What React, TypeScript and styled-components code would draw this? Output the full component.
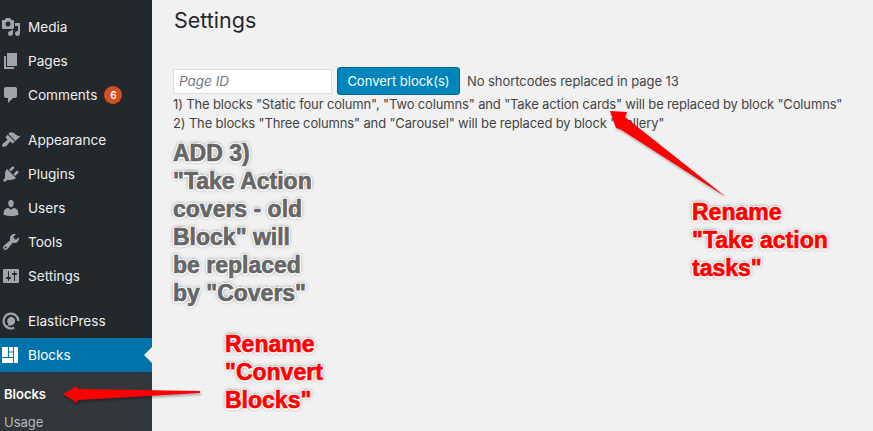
import { createGlobalStyle, styled } from 'styled-components';

const GlobalStyle = createGlobalStyle`
  html, body {
    margin: 0;
    padding: 0;
    background: #f1f1f1;
  }
`;

const ICONS: Record<string, string> = {
  media:
    'M13 11V4c0-.55-.45-1-1-1h-1.67L9 1H5L3.67 3H2c-.55 0-1 .45-1 1v7c0 .55.45 1 1 1h10c.55 0 1-.45 1-1zM7 4.500c1.380 0 2.500 1.120 2.500 2.500S8.380 9.500 7 9.500 4.500 8.380 4.500 7 5.620 4.500 7 4.500zM14 6h5v10.500c0 1.380-1.120 2.500-2.500 2.500S14 17.880 14 16.500s1.120-2.500 2.500-2.500c.17 0 .34.02.5.05V9h-3V6zm-4 8.050V13h2v3.500c0 1.380-1.120 2.500-2.500 2.500S7 17.880 7 16.500 8.120 14 9.500 14c.17 0 .34.02.5.05z',
  pages: 'M6 15V2h10v13H6zm-1 1h8v2H3V5h2v11z',
  comments: 'M5 2h9c1.100 0 2 .9 2 2v7c0 1.100-.9 2-2 2h-2l-5 5v-5H5c-1.100 0-2-.9-2-2V4c0-1.100.9-2 2-2z',
  appearance:
    'M14.480 11.060L7.410 3.990l1.500-1.500c.5-.56 2.300-.47 3.510.32 1.210.8 1.430 1.280 2.910 2.100 1.180.64 2.450 1.260 4.450.85zm-.71.71L6.700 4.700 4.930 6.470c-.39.39-.39 1.020 0 1.410l1.060 1.060c.39.39.39 1.030 0 1.420-.6.6-1.430 1.110-2.210 1.690-.35.26-.7.53-1.010.84C1.430 13.230.65 15.260 1.500 16.500c1.240.85 3.270.07 4.610-1.270.31-.31.58-.66.84-1.010.58-.78 1.090-1.610 1.690-2.210.39-.39 1.020-.39 1.410 0l1.060 1.060c.39.39 1.020.39 1.410 0z',
  plugins:
    'M13.110 4.360L9.870 7.600 8 5.730l3.240-3.240c.35-.34 1.050-.2 1.560.32.52.51.66 1.210.31 1.550zm-8 1.770l.91-1.120 9.010 9.010-1.190.84c-.71.71-2.630 1.160-3.820 1.160H6.140L4.900 17.260c-.59.59-1.540.59-2.120 0-.59-.58-.59-1.530 0-2.120l1.240-1.240v-3.880c0-1.130.4-3.190 1.090-3.890zm7.260 3.970l3.240-3.240c.34-.35 1.040-.21 1.550.31.52.51.66 1.210.31 1.550l-3.240 3.250z',
  users:
    'M10 9.250c-2.270 0-2.730-3.440-2.730-3.440C7 4.020 7.820 2 9.970 2c2.160 0 2.980 2.020 2.710 3.810 0 0-.41 3.440-2.680 3.440zm0 2.570L12.720 10c2.390 0 4.520 2.330 4.520 4.530v2.490s-3.650 1.130-7.240 1.130c-3.650 0-7.240-1.130-7.240-1.130v-2.490c0-2.250 1.940-4.480 4.470-4.480z',
  tools:
    'M16.680 9.770c-1.340 1.340-3.300 1.670-4.950.99l-5.410 6.520c-.99.99-2.590.99-3.580 0s-.99-2.590 0-3.570l6.520-5.420c-.68-1.650-.35-3.610.99-4.950 1.280-1.280 3.120-1.620 4.720-1.060l-2.890 2.890 2.820 2.820 2.860-2.870c.53 1.580.18 3.390-1.080 4.650zM3.810 16.210c.4.39 1.040.39 1.430 0 .4-.4.4-1.040 0-1.430-.39-.4-1.030-.4-1.430 0-.39.39-.39 1.030 0 1.430z',
  settings:
    'M18 16V4c0-.55-.45-1-1-1H3c-.55 0-1 .45-1 1v12c0 .55.45 1 1 1h14c.55 0 1-.45 1-1zM8 11h1c.55 0 1 .45 1 1s-.45 1-1 1H8v1.500c0 .28-.22.5-.5.5s-.5-.22-.5-.5V13H6c-.55 0-1-.45-1-1s.45-1 1-1h1V5.500c0-.28.22-.5.5-.5s.5.22.5.5V11zm5-2h-1c-.55 0-1-.45-1-1s.45-1 1-1h1V5.500c0-.28.22-.5.5-.5s.5.22.5.5V7h1c.55 0 1 .45 1 1s-.45 1-1 1h-1v5.500c0 .28-.22.5-.5.5s-.5-.22-.5-.5V9z',
  elastic:
    'M10 1.500a8.500 8.500 0 1 0 3.800 16.100l-1-1.900A6.300 6.300 0 1 1 16.300 10h2.200A8.500 8.500 0 0 0 10 1.500zM10.500 5.700a4.300 4.300 0 0 0-3 7.400l-1.200 2 2.500-.7a4.300 4.300 0 1 0 1.700-8.700z',
  blocks: 'M1 2h6v10H1zM8 2h4v4.500H8zM8 7.500h4V12H8zM13 2h4v16h-4zM1 13h11v5H1z',
};

type MenuEntry = { label: string; icon: string; badge?: string; spaced?: boolean };

const MENU: MenuEntry[] = [
  { label: 'Media', icon: 'media' },
  { label: 'Pages', icon: 'pages' },
  { label: 'Comments', icon: 'comments', badge: '6' },
  { label: 'Appearance', icon: 'appearance', spaced: true },
  { label: 'Plugins', icon: 'plugins' },
  { label: 'Users', icon: 'users' },
  { label: 'Tools', icon: 'tools' },
  { label: 'Settings', icon: 'settings' },
  { label: 'ElasticPress', icon: 'elastic', spaced: true },
];

const MenuIcon = ({ name }: { name: string }) => (
  <IconSvg viewBox="0 0 20 20" aria-hidden="true">
    <path d={ICONS[name]} fillRule="evenodd" />
  </IconSvg>
);

const App = () => (
  <>
    <GlobalStyle />
    <Page>
      <Sidebar>
        {MENU.map((item) => (
          <MenuItem key={item.label} $spaced={item.spaced}>
            <MenuIcon name={item.icon} />
            <span>{item.label}</span>
            {item.badge && <Badge>{item.badge}</Badge>}
          </MenuItem>
        ))}
        <ActiveItem>
          <MenuIcon name="blocks" />
          <span>Blocks</span>
        </ActiveItem>
        <SubMenu>
          <SubItem $current>Blocks</SubItem>
          <SubItem>Usage</SubItem>
        </SubMenu>
      </Sidebar>
      <Main>
        <Title>Settings</Title>
        <FormRow>
          <PageInput placeholder="Page ID" />
          <ConvertButton>Convert block(s)</ConvertButton>
          <Status>No shortcodes replaced in page 13</Status>
        </FormRow>
        <Note>1) The blocks "Static four column", "Two columns" and "Take action cards" will be replaced by block "Columns"</Note>
        <Note>2) The blocks "Three columns" and "Carousel" will be replaced by block "Gallery"</Note>
      </Main>
      <Callout $left={173} $top={139} $tone="gray">
        ADD 3)
        <br />
        "Take Action
        <br />
        covers - old
        <br />
        Block" will
        <br />
        be replaced
        <br />
        by "Covers"
      </Callout>
      <Callout $left={692} $top={198}>
        Rename
        <br />
        "Take action
        <br />
        tasks"
      </Callout>
      <Callout $left={225} $top={330}>
        Rename
        <br />
        "Convert
        <br />
        Blocks"
      </Callout>
      <ArrowLayer viewBox="0 0 873 431">
        <polygon points="610,111 627,112 625,117 726,197 620,129 616,128" />
        <polygon points="63,394 77,386 78,389 200,391 200,393 78,400 77,403" />
      </ArrowLayer>
    </Page>
  </>
);

const Page = styled.div`
  position: relative;
  display: flex;
  width: 873px;
  height: 431px;
  overflow: hidden;
  background: #f1f1f1;
  font-family: Inter, 'Liberation Sans', sans-serif;
`;

const Sidebar = styled.nav`
  display: flex;
  flex-direction: column;
  flex: none;
  width: 152px;
  padding-top: 10px;
  background: #23282d;
`;

const IconSvg = styled.svg`
  flex: none;
  width: 20px;
  height: 20px;
  margin-right: 7px;
  fill: #a0a5aa;
`;

const MenuItem = styled.div<{ $spaced?: boolean }>`
  display: flex;
  flex: none;
  align-items: center;
  height: 34px;
  margin-top: ${(p) => (p.$spaced ? '11px' : '0')};
  padding-left: 1px;
  color: #eeeeee;
  font-size: 13.6px;
  line-height: 32px;
`;

const ActiveItem = styled(MenuItem)`
  position: relative;
  background: #0073aa;
  color: #fff;

  svg {
    fill: #fff;
  }

  &::after {
    content: '';
    position: absolute;
    right: 0;
    top: 50%;
    margin-top: -8px;
    border: 8px solid transparent;
    border-left-width: 0;
    border-right-color: #f1f1f1;
  }
`;

const Badge = styled.span`
  display: flex;
  align-items: center;
  justify-content: center;
  width: 18px;
  height: 18px;
  margin-left: 7px;
  border-radius: 50%;
  background: #d54e21;
  color: #fff;
  font-size: 10px;
  font-weight: 600;
`;

const SubMenu = styled.div`
  display: flex;
  flex-direction: column;
  flex: 1;
  padding-top: 8px;
  background: #32373c;
`;

const SubItem = styled.div<{ $current?: boolean }>`
  height: 28px;
  padding-left: 4px;
  color: ${(p) => (p.$current ? '#fff' : '#b4b9be')};
  font-size: 13px;
  font-weight: ${(p) => (p.$current ? 600 : 400)};
  line-height: 28px;
`;

const Main = styled.main`
  display: flex;
  flex-direction: column;
  flex: 1;
  padding: 6px 0 0 21px;
  color: #444;
  font-size: 13px;
`;

const Title = styled.h1`
  margin: 0 0 33px 1px;
  color: #23282d;
  font-size: 21.5px;
  font-weight: 400;
  line-height: 28px;
`;

const FormRow = styled.div`
  display: flex;
  align-items: center;
  height: 28px;
`;

const PageInput = styled.input`
  box-sizing: border-box;
  width: 159px;
  height: 25px;
  padding: 0 5px;
  border: 1px solid #ddd;
  background: #fff;
  font-family: inherit;
  font-size: 13.5px;

  &::placeholder {
    color: #72777c;
    font-style: italic;
  }
`;

const ConvertButton = styled.button`
  box-sizing: border-box;
  width: 123px;
  height: 28px;
  margin-left: 5px;
  padding: 0;
  border: 1px solid #006799;
  border-radius: 3px;
  background: #0085ba;
  color: #fff;
  font-family: inherit;
  font-size: 13px;
`;

const Status = styled.span`
  margin-left: 7px;
  letter-spacing: -0.06px;
`;

const Note = styled.p`
  margin: 0;
  line-height: 19px;
  letter-spacing: -0.15px;
  white-space: nowrap;
`;

const Callout = styled.div<{ $left: number; $top: number; $tone?: 'gray' }>`
  position: absolute;
  left: ${(p) => p.$left}px;
  top: ${(p) => p.$top}px;
  color: ${(p) => (p.$tone === 'gray' ? '#666666' : '#ff0000')};
  font-family: 'Liberation Sans', Arial, sans-serif;
  font-size: 23px;
  font-weight: 700;
  line-height: 28px;
  white-space: nowrap;
  -webkit-text-stroke: 0.7px ${(p) => (p.$tone === 'gray' ? '#666666' : '#ff0000')};
  text-shadow:
    1.5px 0 0 #fff,
    -1.5px 0 0 #fff,
    0 1.5px 0 #fff,
    0 -1.5px 0 #fff,
    1px 1px 0 #fff,
    -1px 1px 0 #fff,
    1px -1px 0 #fff,
    -1px -1px 0 #fff,
    0 0 4px rgba(0, 0, 0, 0.7);
`;

const ArrowLayer = styled.svg`
  position: absolute;
  left: 0;
  top: 0;
  width: 873px;
  height: 431px;
  fill: #ff0000;
  filter: drop-shadow(1px 2px 1px rgba(0, 0, 0, 0.3));
  pointer-events: none;
`;

export default App;
